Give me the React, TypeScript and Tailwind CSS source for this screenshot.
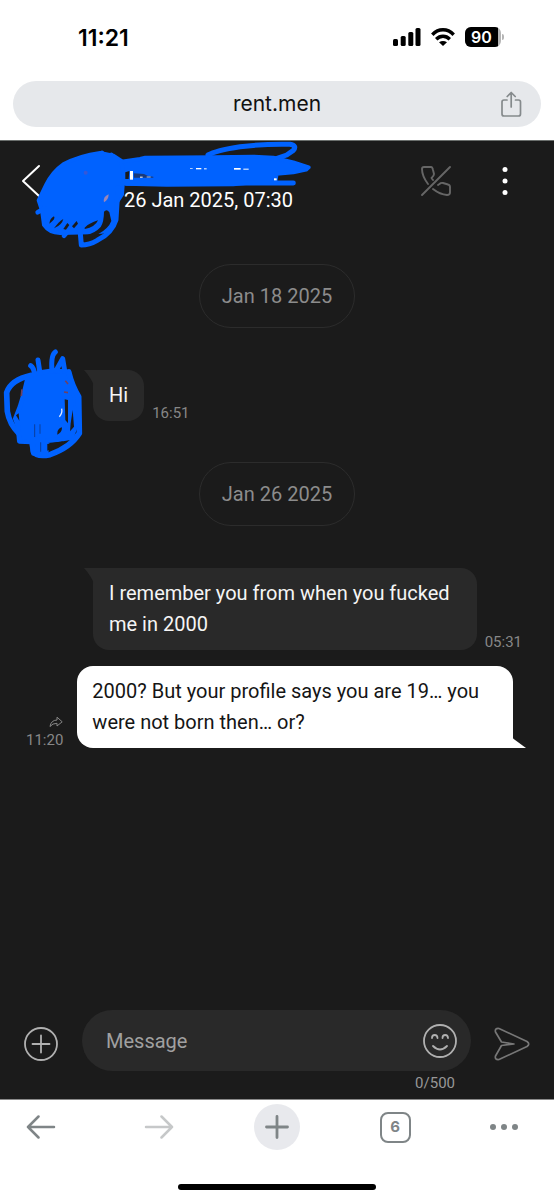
import { useState } from "react";
import type { ReactNode } from "react";

const INK = "#0062ff";
const PANEL = "#1b1b1b";

function HeaderScribble() {
  return (
    <svg
      viewBox="0 0 990 360"
      className="pointer-events-none absolute left-0 top-0 h-[120px] w-[330px]"
      aria-hidden="true"
    >
      <g fill={INK} stroke={INK} strokeWidth="12" strokeLinejoin="round" strokeLinecap="round">
        <path d="M300 36 L340 44 L364 60 L372 80 L366 160 L350 184 L346 240 Q336 268 306 272 L270 274 L180 276 Q148 276 132 252 L126 208 L116 178 L138 132 Q158 92 190 70 Q240 44 300 36Z" />
        <path d="M364 62 L420 54 L436 50 L640 49 L760 47 L820 50 L880 64 L926 79 L918 86 L880 94 L830 98 L826 122 L760 124 L700 130 L500 131 L376 128 Z" />
        <path fill="none" strokeWidth="15" d="M354 140 L348 236 Q336 276 292 298 Q268 312 244 312 L240 266" />
        <path fill="none" strokeWidth="15" d="M624 42 Q648 28 720 17 Q800 8 870 10 Q892 14 880 28 L860 42 L820 56" />
        <path fill="none" strokeWidth="15" d="M380 127 L880 126" />
        <path fill="none" strokeWidth="14" d="M113 214 L134 202 M192 284 L204 270 M306 36 L298 44 M334 42 L322 54" />
      </g>
      <g fill={PANEL}>
        <path d="M312 212 Q320 202 328 214 L334 240 Q326 262 294 280 Q272 292 256 296 L256 284 Q286 276 302 258 Q312 242 312 212Z" />
        <path d="M148 248 Q150 232 162 226 Q168 234 148 248Z" />
        <path d="M162 262 Q176 242 190 234 Q186 252 162 262Z" />
        <path d="M190 264 L202 246 208 252 198 266Z" />
        <path d="M216 256 L230 240 234 248 222 262Z" />
        <path d="M254 260 Q268 246 294 238 Q286 258 254 264Z" />
        <path d="M376 94 L388 90 386 114 376 114Z" />
      </g>
      <path d="M401 97 L432 99 444 105 460 107 460 110 402 110Z" fill="#1b3a78" />
      <g fill="#ffffff">
        <rect x="390" y="90" width="9" height="26" />
        <rect x="420" y="107" width="8" height="3" />
        <rect x="440" y="107" width="12" height="2" />
        <rect x="588" y="81" width="16" height="4" />
        <rect x="570" y="82" width="8" height="2" />
        <rect x="612" y="82" width="8" height="3" />
        <rect x="702" y="81" width="20" height="5" />
        <rect x="730" y="83" width="16" height="3" />
        <rect x="822" y="112" width="8" height="6" />
      </g>
      <path d="M312 184 Q308 168 326 160 Q326 176 312 184Z" fill="#9a86b8" />
      <circle cx="257" cy="95" r="6" fill="#3558d8" />
    </svg>
  );
}

function AvatarScribble() {
  return (
    <svg
      viewBox="0 0 660 390"
      className="pointer-events-none absolute left-0 -top-[30px] h-[130px] w-[220px]"
      aria-hidden="true"
    >
      <g fill={INK} stroke={INK} strokeLinejoin="round" strokeLinecap="round">
        <path strokeWidth="14" d="M84 110 L120 98 L160 92 L206 96 L212 130 L226 180 L230 250 L214 292 L180 298 L142 302 L138 342 L100 340 L94 306 L58 304 L54 258 L46 236 L60 200 L72 160 Z" />
        <path fill="none" strokeWidth="17" d="M94 106 Q32 120 20 158 L22 214 Q28 252 58 282" />
        <path fill="none" strokeWidth="17" d="M206 96 Q216 138 236 170 L238 280 Q212 322 150 344 Q110 352 100 334 L98 306" />
        <path fill="none" strokeWidth="15" d="M92 77 Q102 84 104 104 M114 60 L120 100 M166 36 Q152 46 156 92 M168 92 L188 56 L194 92" />
      </g>
      <g fill="none" stroke="#0a3e9c" strokeWidth="3" strokeLinecap="round">
        <path d="M104 254 V290 M120 254 V280 M122 308 V334" />
      </g>
      <g fill={PANEL}>
        <path d="M56 220 L58 242 48 226Z" />
        <path d="M172 280 Q172 266 186 262 Q186 278 172 284Z" />
        <path d="M194 178 L204 180 204 250 196 240Z" />
        <path d="M218 210 L222 260 210 274 212 250Z" />
        <path d="M142 312 L190 304 Q164 326 142 332Z" />
      </g>
      <path d="M178 230 Q188 220 185 206" fill="none" stroke="#dfe9ff" strokeWidth="4" />
      <path d="M196 122 L204 132 M192 156 L204 158 M66 148 L64 168" stroke="#6e4262" strokeWidth="5" />
    </svg>
  );
}

function DatePill({ children }: { children: ReactNode }) {
  return (
    <div className="flex h-16 items-center self-center rounded-full border border-[#2c2c2c] px-[22px] text-xl text-[#8c8c8c]">
      {children}
    </div>
  );
}

function Incoming({ text, time, avatar }: { text: string; time: string; avatar?: boolean }) {
  return (
    <div className="relative flex items-end gap-2 pl-[93px] pr-8">
      {avatar && <AvatarScribble />}
      <div className="relative rounded-2xl rounded-tl-none bg-[#292929] px-4 py-[10px] text-xl leading-[31px] text-[#f5f5f5]">
        <svg viewBox="0 0 10 16" className="absolute -left-[9px] top-0 h-4 w-[10px]" aria-hidden="true">
          <path d="M0 0H10V16Q8 9 0 0Z" fill="#292929" />
        </svg>
        {text}
      </div>
      <time className="shrink-0 text-[15px] leading-4 text-[#878787]">{time}</time>
    </div>
  );
}

function Outgoing({ text, time }: { text: string; time: string }) {
  return (
    <div className="flex items-end gap-[14px] pl-[26px] pr-[41px]">
      <div className="flex shrink-0 flex-col items-end gap-1 text-[#878787]">
        <svg viewBox="0 0 14 12" className="h-3 w-[14px]" fill="none" stroke="currentColor" strokeLinejoin="round" aria-hidden="true">
          <path d="M1 10.5Q2 4.2 8 4V1.2L13.2 5.8 8 10V7.3Q3.500 7.200 1 10.500Z" />
        </svg>
        <time className="text-[15px] leading-4">{time}</time>
      </div>
      <div className="relative flex-1 rounded-2xl rounded-br-none bg-white px-[15px] py-[10px] text-xl leading-[31px] text-[#151515]">
        {text}
        <svg viewBox="0 0 14 10" className="absolute -right-[13px] bottom-0 h-[10px] w-[14px]" aria-hidden="true">
          <path d="M0 0L1 .5 14 10H0Z" fill="#fff" />
        </svg>
      </div>
    </div>
  );
}

function StatusBar() {
  return (
    <div className="flex h-[81px] items-start justify-between pl-[78px] pr-[50px] pt-[25px]">
      <span className="font-['Inter',sans-serif] text-[23px] font-semibold leading-[26px] text-black">11:21</span>
      <div className="flex h-6 items-center gap-[10px]">
        <svg viewBox="0 0 28 18" className="h-[18px] w-7" aria-hidden="true">
          <rect x="0" y="11" width="5" height="7" rx="1.500" />
          <rect x="7.700" y="8" width="5" height="10" rx="1.500" />
          <rect x="15.300" y="4" width="5" height="14" rx="1.500" />
          <rect x="22.500" y="0" width="5" height="18" rx="1.500" />
        </svg>
        <svg viewBox="0 0 24 18" className="h-[18px] w-6" fill="none" stroke="#000" strokeWidth="3.400" aria-hidden="true">
          <path d="M1.300 6.700Q6 1.800 12 1.800T22.700 6.700" />
          <path d="M5.200 11.200Q8.200 8.200 12 8.200T18.800 11.200" />
          <path d="M12 18L8 14.300Q12 11.500 16 14.300Z" fill="#000" stroke="none" />
        </svg>
        <div className="flex items-center gap-px">
          <div className="h-5 w-9 overflow-hidden rounded-[6px] bg-[#b5b5b5]">
            <div className="flex h-5 w-[33px] items-center justify-center bg-black font-['Inter',sans-serif] text-base font-semibold text-white">
              90
            </div>
          </div>
          <span className="h-[6px] w-[2px] rounded-r-full bg-[#b5b5b5]" />
        </div>
      </div>
    </div>
  );
}

export default function App() {
  const [message, setMessage] = useState("");

  return (
    <div className="flex min-h-screen flex-col bg-white font-['Roboto',sans-serif]">
      <StatusBar />

      <div className="px-[13px] pb-[13px]">
        <div className="grid h-[46px] grid-cols-[1fr_auto_1fr] items-center rounded-full bg-[#e6e8eb] px-[18px]">
          <a href="#" className="col-start-2 font-['Inter',sans-serif] text-[21px] text-[#111]">
            rent.men
          </a>
          <button type="button" aria-label="Share" className="justify-self-end text-[#858a8c]">
            <svg viewBox="0 0 24 28" className="h-7 w-6" fill="none" stroke="currentColor" strokeWidth="1.700" strokeLinecap="round" strokeLinejoin="round">
              <path d="M8 10H5Q3 10 3 12V24Q3 26 5 26H19.500Q21.500 26 21.500 24V12Q21.500 10 19.500 10H16.500M12.200 17V3M8.200 6.500L12.200 2.500 16.200 6.500" />
            </svg>
          </button>
        </div>
      </div>

      <section className="flex flex-1 flex-col border-t border-[#6b6f6d] bg-[#1b1b1b]">
        <header className="relative flex h-[80px] items-center pl-[21px] pr-[41px]">
          <button type="button" aria-label="Back" className="text-white">
            <svg viewBox="0 0 20 34" className="h-[34px] w-5" fill="none" stroke="currentColor" strokeWidth="2" strokeLinecap="round" strokeLinejoin="round">
              <path d="M18 2L2 17 18 32" />
            </svg>
          </button>
          <time className="flex-1 pl-[83px] pt-[38px] text-xl leading-6 text-white">26 Jan 2025, 07:30</time>
          <HeaderScribble />
          <button type="button" aria-label="Call unavailable" className="mr-[45px] text-[#666]">
            <svg viewBox="0 0 32 32" className="h-8 w-8" fill="none" stroke="currentColor" strokeWidth="1.900" strokeLinecap="round" strokeLinejoin="round">
              <path d="M2 30L30 2M8 19Q2 11 2 4Q2 2 4 2H11Q12.500 2 13 5L14 9Q14 11 11.500 13L13 15M18 20L19.500 19Q21 17.500 23 18L28 19.500Q30 20 30 22V27.500Q30 30 27 30Q20 29.500 13 24" />
            </svg>
          </button>
          <button type="button" aria-label="More options" className="text-white">
            <svg viewBox="0 0 16 32" className="h-8 w-4" fill="currentColor">
              <circle cx="8" cy="4.500" r="2.500" />
              <circle cx="8" cy="16" r="2.500" />
              <circle cx="8" cy="27.500" r="2.500" />
            </svg>
          </button>
        </header>

        <main className="flex flex-1 flex-col pb-8 pt-[43px]">
          <DatePill>Jan 18 2025</DatePill>
          <div className="pb-[41px] pt-[42px]">
            <Incoming text="Hi" time="16:51" avatar />
          </div>
          <DatePill>Jan 26 2025</DatePill>
          <div className="flex flex-col gap-4 pt-[42px]">
            <Incoming text="I remember you from when you fucked me in 2000" time="05:31" />
            <Outgoing text="2000? But your profile says you are 19… you were not born then… or?" time="11:20" />
          </div>
        </main>

        <form className="flex items-start px-6 pb-1" onSubmit={(event) => event.preventDefault()}>
          <button type="button" aria-label="Add attachment" className="mt-[17px] text-[#b0b0b0]">
            <svg viewBox="0 0 34 34" className="h-[34px] w-[34px]" fill="none" stroke="currentColor" strokeWidth="1.800" strokeLinecap="round">
              <circle cx="17" cy="17" r="16" />
              <path d="M17 8.500V25.500M8.500 17H25.500" />
            </svg>
          </button>
          <div className="ml-6 mr-[23px] flex min-w-0 flex-1 flex-col">
            <div className="flex h-[61px] items-center rounded-full bg-[#292929] pl-6 pr-[14px]">
              <input
                aria-label="Message"
                placeholder="Message"
                maxLength={500}
                value={message}
                onChange={(event) => setMessage(event.target.value)}
                className="min-w-0 flex-1 bg-transparent text-xl text-white outline-none placeholder:text-[#a0a0a0]"
              />
              <button type="button" aria-label="Emoji" className="text-[#b0b0b0]">
                <svg viewBox="0 0 34 34" className="h-[34px] w-[34px]" fill="none" stroke="currentColor" strokeWidth="1.800" strokeLinecap="round">
                  <circle cx="17" cy="17" r="16" />
                  <path d="M9 14Q9 11 11.700 11T14.500 14M19.500 14Q19.500 11 22.200 11T25 14M10 22Q17 29 24 22" />
                </svg>
              </button>
            </div>
            <span className="self-end pr-4 text-[15px] leading-6 text-[#979797]">{message.length}/500</span>
          </div>
          <button type="submit" aria-label="Send" className="mt-[17px] text-[#777]">
            <svg viewBox="0 0 36 34" className="h-[34px] w-9" fill="none" stroke="currentColor" strokeWidth="1.700" strokeLinejoin="round">
              <path d="M5 1.500L33 14.500Q36.500 17 33 19.500L5 32.500Q.500 33 1.500 29L7.500 18.500L20 17 7.500 15L1.500 5Q.500 1 5 1.500Z" />
            </svg>
          </button>
        </form>
      </section>

      <nav className="border-t border-[#8a8a8a] bg-white pt-1">
        <div className="flex h-[46px] items-center justify-between px-[18px] text-[#7f8587]">
          <button type="button" aria-label="Go back" className="flex w-[46px] justify-center">
            <svg viewBox="0 0 30 24" className="h-6 w-[30px]" fill="none" stroke="currentColor" strokeWidth="2.500" strokeLinecap="round" strokeLinejoin="round">
              <path d="M28 12H2M12.500 1.500L2 12 12.500 22.500" />
            </svg>
          </button>
          <button type="button" aria-label="Go forward" className="flex w-[46px] justify-center text-[#c6c8c9]">
            <svg viewBox="0 0 30 24" className="h-6 w-[30px]" fill="none" stroke="currentColor" strokeWidth="2.500" strokeLinecap="round" strokeLinejoin="round">
              <path d="M2 12H28M17.500 1.500L28 12 17.500 22.500" />
            </svg>
          </button>
          <button type="button" aria-label="New tab" className="flex h-[46px] w-[46px] items-center justify-center rounded-full bg-[#e8e9ed]">
            <svg viewBox="0 0 24 24" className="h-6 w-6" fill="none" stroke="currentColor" strokeWidth="2.800" strokeLinecap="round">
              <path d="M12 1.500V22.500M1.500 12H22.500" />
            </svg>
          </button>
          <button type="button" aria-label="Open tabs" className="flex w-[46px] justify-center">
            <span className="flex h-[31px] w-[31px] items-center justify-center rounded-[8px] border-2 border-[#7f8587] font-['Inter',sans-serif] text-[15px] font-bold">
              6
            </span>
          </button>
          <button type="button" aria-label="Browser menu" className="flex w-[46px] justify-start">
            <svg viewBox="0 0 30 8" className="h-2 w-[30px]" fill="currentColor">
              <circle cx="3" cy="4" r="3" />
              <circle cx="14" cy="4" r="3" />
              <circle cx="25" cy="4" r="3" />
            </svg>
          </button>
        </div>
        <div className="flex justify-center pb-[10px] pt-[34px]">
          <span className="h-[6px] w-[198px] rounded-full bg-black" />
        </div>
      </nav>
    </div>
  );
}
